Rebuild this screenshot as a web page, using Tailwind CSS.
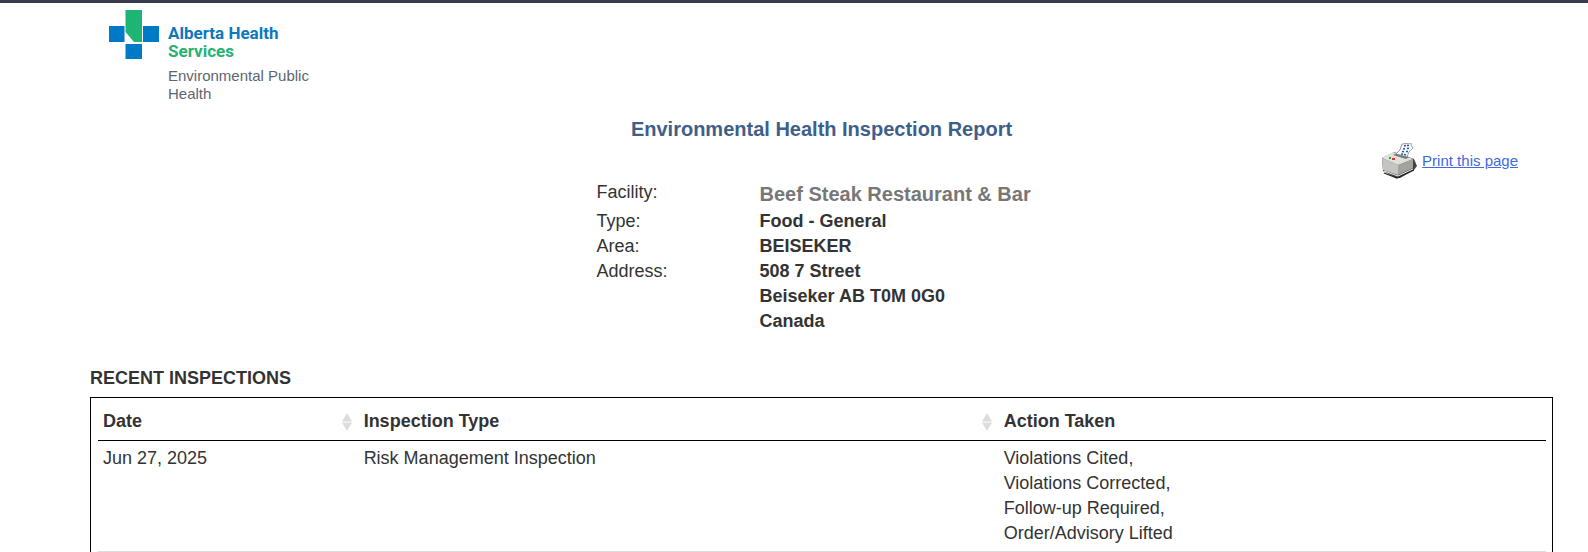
<!DOCTYPE html>
<html lang="en">
<head>
  <meta charset="UTF-8" />
  <meta name="viewport" content="width=device-width, initial-scale=1.0" />
  <title>Environmental Health Inspection Report</title>
  <script src="https://cdn.jsdelivr.net/npm/@tailwindcss/browser@4"></script>
</head>
<body class="bg-white border-t-3 border-[#363c4e] font-['Liberation_Sans',Arial,sans-serif] text-lg leading-[25px] text-[#333]">
  <div class="pl-[90px] pr-[35px] pt-[7px]">
    <header class="flex items-start gap-2 pl-[18px]">
      <svg class="w-[52px] h-[50px] shrink-0" viewBox="0 0 52 50" xmlns="http://www.w3.org/2000/svg">
        <path fill="#0079c6" d="M1 16h15.5v16H1zM35 16h16v16H35zM17.5 34H34v15H17.5z" />
        <path fill="#1eb473" d="M17.5 0H34v32h-8l-8.5-10z" />
      </svg>
      <div class="pt-3.5">
        <div class="font-[Roboto,'Liberation_Sans',sans-serif] font-bold text-[17px] leading-[18px] text-[#0b78bd]">
          <p>Alberta Health</p>
          <p class="text-[#25b373]">Services</p>
        </div>
        <div class="pt-[7px] text-[15px] leading-[18px] text-[#5d6670]">Environmental Public<br />Health</div>
      </div>
    </header>

    <h1 class="pt-3 text-center text-xl leading-7 font-bold text-[#3e5f8a]">Environmental Health Inspection Report</h1>

    <div class="flex justify-end items-center gap-[5px] pr-[35px]">
      <!-- printer -->
      <svg class="w-9 h-9" viewBox="0 0 36 36" xmlns="http://www.w3.org/2000/svg">
        <path fill="#444" d="M1 15l12-6 20 7 3 7-3 4-14 8h-4L2 28z" />
        <path fill="#c4c4c1" d="M1 15l16 7v10L2 27z" />
        <path fill="#a2a29f" d="M17 22l15-6v9l-15 7z" />
        <path fill="#e0e0dd" d="M1 15l11-6 20 7-15 6z" />
        <path fill="#777" d="M12 12l4-2 12 4-3 2z" />
        <path fill="#f7faff" stroke="#777" stroke-width=".7" d="M15 11q5-3 6-10l9-1q0 3 2 5-5 3-6 9z" />
        <path fill="none" stroke="#2458a6" stroke-width="1.5" d="M23 3l2-.4M26 2.6l2-.4M22 6l2-.2M26 5.500l2-.3M21 8.500l2 .2M25 8.500l2 0M20 11l2 .3M23 11.600l2 .3" />
        <path fill="#28a745" d="M8 14h2v2H8z" />
        <path fill="#d33" d="M11 15h3v2h-3z" />
        <path fill="none" stroke="#eee" d="M3 28l14 5 15-7" />
        <path fill="none" stroke="#222" stroke-width="1.2" d="M3 30l13 5 17-8" />
      </svg>
      <a href="#" class="text-[15px] leading-5 text-[#4169e1] underline">Print this page</a>
    </div>

    <dl class="w-[450px] mx-auto grid grid-cols-[163px_1fr] pt-px">
      <dt>Facility:</dt>
      <dd class="pb-px text-xl leading-7 font-bold text-[#777]">Beef Steak Restaurant &amp; Bar</dd>
      <dt>Type:</dt>
      <dd class="font-bold">Food - General</dd>
      <dt>Area:</dt>
      <dd class="font-bold">BEISEKER</dd>
      <dt>Address:</dt>
      <dd class="font-bold">508 7 Street<br />Beiseker AB T0M 0G0<br />Canada</dd>
    </dl>

    <h2 class="pt-8 pb-1.5 font-bold">RECENT INSPECTIONS</h2>
    <div class="border border-black pl-[7px] pr-1.5 py-1.5">
      <table class="w-full table-fixed border-collapse text-left">
        <colgroup>
          <col class="w-[18%]" />
          <col class="w-[44.2%]" />
          <col />
        </colgroup>
        <thead>
          <tr class="border-b border-black">
            <th class="pl-[5px] pr-[7px] pt-[5px] pb-1.5">
              <div class="flex items-center justify-between">Date
                <svg class="w-2.5 h-[18px]" viewBox="0 0 10 18" fill="#dcdcdc" xmlns="http://www.w3.org/2000/svg"><path d="M5 0l5 8.500H0zM0 9.500h10L5 18z" /></svg>
              </div>
            </th>
            <th class="pl-[5px] pr-[7px] pt-[5px] pb-1.5">
              <div class="flex items-center justify-between">Inspection Type
                <svg class="w-2.5 h-[18px]" viewBox="0 0 10 18" fill="#dcdcdc" xmlns="http://www.w3.org/2000/svg"><path d="M5 0l5 8.500H0zM0 9.500h10L5 18z" /></svg>
              </div>
            </th>
            <th class="pl-[5px] pt-[5px] pb-1.5">Action Taken</th>
          </tr>
        </thead>
        <tbody>
          <tr class="border-b border-[#ddd] align-top">
            <td class="pl-[5px] py-[5px]">Jun 27, 2025</td>
            <td class="pl-[5px] py-[5px]">Risk Management Inspection</td>
            <td class="pl-[5px] py-[5px]">Violations Cited,<br />Violations Corrected,<br />Follow-up Required,<br />Order/Advisory Lifted</td>
          </tr>
        </tbody>
      </table>
    </div>
  </div>
</body>
</html>
